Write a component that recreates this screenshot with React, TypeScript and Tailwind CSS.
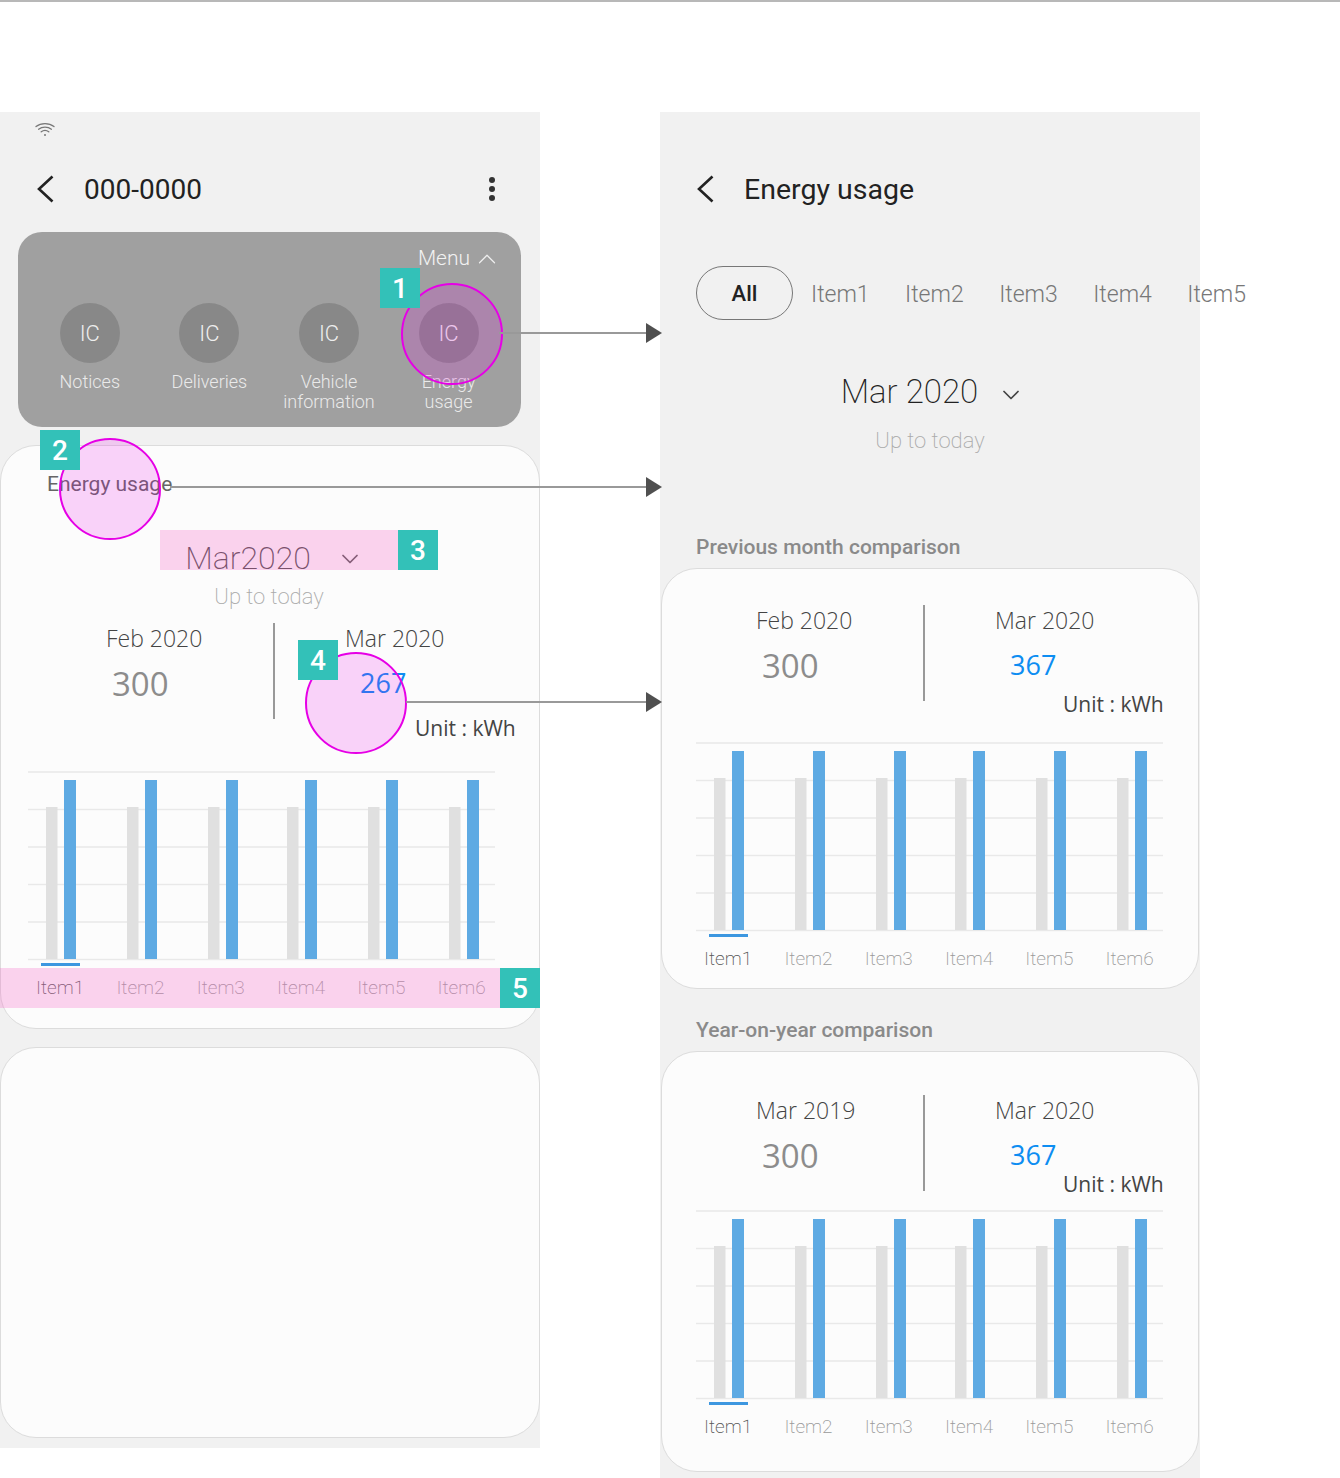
import { ChevronDown, ChevronUp } from "lucide-react"

const chartXs = [
  [18, 36],
  [99, 117],
  [180, 198],
  [259, 277],
  [340, 358],
  [421, 439],
]
const chartLabels = ["Item1", "Item2", "Item3", "Item4", "Item5", "Item6"]
const gridYs = [1, 38.5, 76, 113.5, 151, 188.5]

function BackIcon() {
  return (
    <svg width="18" height="28" viewBox="0 0 18 28" fill="none" stroke="#222" strokeWidth="2.6" className="shrink-0">
      <path d="M16.5 1.5L3 14L16.5 26.5" />
    </svg>
  )
}

function MoreIcon() {
  return (
    <svg width="8" height="26" viewBox="0 0 8 26" fill="#333">
      <circle cx="4" cy="4" r="3" />
      <circle cx="4" cy="13" r="3" />
      <circle cx="4" cy="22" r="3" />
    </svg>
  )
}

function WifiIcon() {
  return (
    <svg width="20" height="15" viewBox="0 0 20 15" fill="none" stroke="#777" strokeWidth="1.3" strokeLinecap="round">
      <path d="M1 4.6C6 .6 14 .6 19 4.6" />
      <path d="M3.6 7.2c3.6-2.9 9.2-2.9 12.8 0" />
      <path d="M6.2 9.8c2.2-1.7 5.4-1.7 7.6 0" />
      <circle cx="10" cy="13" r="1" fill="#777" stroke="none" />
    </svg>
  )
}

function Chart() {
  return (
    <div className="w-[467px]">
      <svg width="467" height="196" viewBox="0 0 467 196" className="block">
        {gridYs.map((y) => (
          <line key={y} x1="0" x2="467" y1={y} y2={y} stroke="#e9e9e9" strokeWidth="1.5" />
        ))}
        {chartXs.map(([gray, blue]) => (
          <g key={gray}>
            <rect x={gray} y="36" width="11.5" height="152" fill="#e0e0e0" />
            <rect x={blue} y="9" width="12" height="179" fill="#5eaae3" />
          </g>
        ))}
        <rect x="13" y="192" width="39" height="3" fill="#3d97e0" />
      </svg>
      <div className="-ml-[8px] flex h-[40px] items-center pt-[3px] text-[19px] font-extralight text-[#999]">
        {chartLabels.map((label, index) => (
          <span key={label} className={`w-[80.3px] shrink-0 text-center ${index === 0 ? "text-[#555]" : ""}`}>
            {label}
          </span>
        ))}
      </div>
    </div>
  )
}

type StatsProps = {
  before: string
  current: string
  value: string
  unitClass: string
  offsetClass: string
}

function Stats({ before, current, value, unitClass, offsetClass }: StatsProps) {
  return (
    <div className={`flex h-[96px] font-['Open_Sans',sans-serif] ${offsetClass}`}>
      <div className="w-[167px]">
        <div className="flex h-[31px] items-center text-[23px] leading-none font-light text-[#444]">{before}</div>
        <div className="mt-[7px] flex h-[44px] items-center pl-[6px] text-[33px] leading-none text-[#8c8c8c]">300</div>
      </div>
      <div className="h-[96px] w-[2px] bg-[#999]" />
      <div className="flex-1">
        <div className="flex h-[31px] items-center pl-[70px] text-[23px] leading-none font-light text-[#444]">{current}</div>
        <div className="mt-[6px] flex h-[44px] items-center pl-[85px] text-[27px] leading-none text-[#0d8df2]">{value}</div>
        <div className={`flex h-[28px] items-center text-[21px] leading-none text-[#444] ${unitClass}`}>Unit : kWh</div>
      </div>
    </div>
  )
}

function Card({ className, children }: { className: string; children?: React.ReactNode }) {
  return <div className={`rounded-[36px] border border-[#dcdcdc] bg-[#fcfcfc] ${className}`}>{children}</div>
}

function MenuItem({ label }: { label: string }) {
  return (
    <div className="flex w-[119.6px] flex-col items-center">
      <div className="flex size-[60px] items-center justify-center rounded-full bg-[#888] pt-[1px] text-[22px] font-light text-[#eee]">IC</div>
      <div className="mt-[9px] w-[100px] text-center text-[18px] leading-[20px] font-light text-[#eaeaea]">{label}</div>
    </div>
  )
}

function LeftScreen() {
  return (
    <div className="h-[1336px] w-[540px] bg-[#f1f1f1]">
      <div className="flex h-[34px] items-end pb-[9px] pl-[35px]"><WifiIcon /></div>
      <div className="mt-[18px] flex h-[50px] items-center pr-[44px] pl-[36px]">
        <BackIcon />
        <span className="ml-[30px] flex-1 pt-[2px] text-[28px] text-[#222]">000-0000</span>
        <MoreIcon />
      </div>
      <div className="mx-[18px] mt-[18px] h-[195px] w-[503px] rounded-[24px] bg-[#a0a0a0]">
        <div className="flex h-[52px] items-center justify-end pt-[1px] pr-[19px] text-[21px] font-light text-[#f2f2f2]">
          Menu
          <ChevronUp size={30} strokeWidth={1} className="ml-[2px] text-[#eee]" />
        </div>
        <div className="mt-[19px] flex pl-[12px]">
          <MenuItem label="Notices" />
          <MenuItem label="Deliveries" />
          <MenuItem label="Vehicle information" />
          <MenuItem label="Energy usage" />
        </div>
      </div>
      <Card className="mt-[18px] h-[584px]">
        <div className="mt-[25px] flex h-[28px] items-center pl-[46px] text-[21px] text-[#666]">Energy usage</div>
        <div className="mt-[37px] flex h-[44px] items-center justify-center gap-[25px] pl-[9px] text-[32px] font-extralight text-[#444]">
          Mar2020
          <ChevronDown size={28} strokeWidth={1.5} className="mt-[2px] text-[#555]" />
        </div>
        <div className="mt-[2px] flex h-[28px] items-center justify-center pr-[2px] text-[22px] font-extralight text-[#aaa]">Up to today</div>
        <div className="mt-[13px]">
          <Stats before="Feb 2020" current="Mar 2020" value="267" unitClass="pl-[140px] mt-[10px]" offsetClass="ml-[105px]" />
        </div>
        <div className="mt-[52px] ml-[27px]"><Chart /></div>
      </Card>
      <Card className="mt-[18px] h-[391px]" />
    </div>
  )
}

function ComparisonCard({ before, unitClass, statsMargin, chartMargin }: { before: string; unitClass: string; statsMargin: string; chartMargin: string }) {
  return (
    <Card className="ml-[1px] h-[421px] w-[538px]">
      <div className={statsMargin}>
        <Stats before={before} current="Mar 2020" value="367" unitClass={unitClass} offsetClass="ml-[94px]" />
      </div>
      <div className={`ml-[34px] ${chartMargin}`}><Chart /></div>
    </Card>
  )
}

function RightScreen() {
  return (
    <div className="h-[1366px] w-[540px] bg-[#f1f1f1]">
      <div className="mt-[52px] flex h-[50px] items-center pl-[36px]">
        <BackIcon />
        <span className="ml-[30px] pt-[2px] text-[28.5px] text-[#222]">Energy usage</span>
      </div>
      <div className="mt-[52px] ml-[36px] flex items-center text-[23px] font-light whitespace-nowrap text-[#777]">
        <div className="flex h-[54px] w-[97px] shrink-0 items-center justify-center rounded-full border-[1.5px] border-[#777] text-[22px] font-medium text-[#222]">All</div>
        <div className="ml-[18px] flex gap-[35.5px] pt-[4px]">
          <span>Item1</span>
          <span>Item2</span>
          <span>Item3</span>
          <span>Item4</span>
          <span>Item5</span>
        </div>
      </div>
      <div className="mt-[50px] flex h-[44px] items-center justify-center gap-[19px] pl-[6px] text-[33px] font-extralight text-[#222]">
        Mar 2020
        <ChevronDown size={28} strokeWidth={1.5} className="mt-[6px] text-[#444]" />
      </div>
      <div className="mt-[12px] flex h-[28px] items-center justify-center text-[22px] font-extralight text-[#aaa]">Up to today</div>
      <div className="mt-[78px] flex h-[30px] items-center pt-[2px] pl-[36px] text-[21px] font-medium text-[#8a8a8a]">Previous month comparison</div>
      <div className="mt-[6px]">
        <ComparisonCard before="Feb 2020" unitClass="pl-[138px] mt-[4px]" statsMargin="mt-[36px]" chartMargin="mt-[41px]" />
      </div>
      <div className="mt-[26px] flex h-[30px] items-center pt-[2px] pl-[36px] text-[21px] font-medium text-[#8a8a8a]">Year-on-year comparison</div>
      <div className="mt-[6px]">
        <ComparisonCard before="Mar 2019" unitClass="pl-[138px] -mt-[6px]" statsMargin="mt-[43px]" chartMargin="mt-[19px]" />
      </div>
    </div>
  )
}

function Badge({ className, children }: { className: string; children: string }) {
  return (
    <div className={`absolute flex size-[40px] items-center justify-center bg-[#33c1b8] pt-[2px] text-[28px] font-medium text-white ${className}`}>
      {children}
    </div>
  )
}

function Ring({ className }: { className: string }) {
  return <div className={`absolute size-[102px] rounded-full border-2 border-[#e600e6] bg-[#e600e6]/[0.17] ${className}`} />
}

function Arrow({ className }: { className: string }) {
  return (
    <div className={`absolute flex h-[20px] items-center ${className}`}>
      <div className="h-[1.5px] flex-1 bg-[#999]" />
      <svg width="16" height="20" viewBox="0 0 16 20" className="-ml-[1px] shrink-0">
        <path d="M0 0L16 10L0 20Z" fill="#505050" />
      </svg>
    </div>
  )
}

export default function App() {
  return (
    <div className="relative h-[1478px] w-[1340px] overflow-hidden border-t-2 border-[#b8b8b8] bg-white font-['Roboto',sans-serif]">
      <div className="flex items-start gap-[120px] pt-[110px]">
        <LeftScreen />
        <RightScreen />
      </div>

      <div className="absolute top-[528px] left-[160px] h-[40px] w-[238px] bg-[#f671cb]/30" />
      <div className="absolute top-[966px] left-0 h-[40px] w-[500px] bg-[#f671cb]/30" />
      <Ring className="top-[281px] left-[401px]" />
      <Ring className="top-[436px] left-[59px]" />
      <Ring className="top-[650px] left-[305px]" />
      <Arrow className="top-[321px] left-[499px] w-[163px]" />
      <Arrow className="top-[475px] left-[170px] w-[492px]" />
      <Arrow className="top-[690px] left-[406px] w-[256px]" />
      <Badge className="top-[266px] left-[380px]">1</Badge>
      <Badge className="top-[428px] left-[40px]">2</Badge>
      <Badge className="top-[528px] left-[398px]">3</Badge>
      <Badge className="top-[638px] left-[298px]">4</Badge>
      <Badge className="top-[966px] left-[500px]">5</Badge>
    </div>
  )
}
